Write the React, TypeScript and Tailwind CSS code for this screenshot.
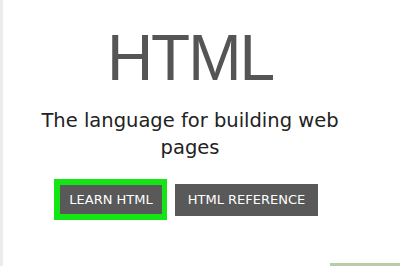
export default function App() {
  return (
    <div className="flex h-[266px] w-[400px] overflow-hidden bg-white">
      <div className="w-[3px] shrink-0 bg-[#ececec]" />
      <div className="flex flex-1 flex-col">
        <div className="flex w-[374px] flex-col items-center pt-[26px]">
          <h1
            className="text-[64px] leading-[64px] font-normal tracking-[-2px] text-[#555555]"
            style={{ fontFamily: '"Liberation Sans", Arial, sans-serif' }}
          >
            HTML
          </h1>
          <p
            className="mt-[17px] w-[320px] text-center text-[19.5px] leading-[27px] text-[#222222]"
            style={{ fontFamily: '"DejaVu Sans", Verdana, sans-serif' }}
          >
            The language for building web pages
          </p>
        </div>
        <div
          className="mt-[18px] flex items-center gap-[8px] pl-[51px]"
          style={{ fontFamily: '"DejaVu Sans", Verdana, sans-serif' }}
        >
          <div className="bg-[#14e514] p-[6px] pr-[5px]">
            <button className="flex h-[29px] w-[102px] items-center justify-center bg-[#595959] text-[13px] text-white">
              LEARN HTML
            </button>
          </div>
          <button className="flex h-[32px] w-[143px] items-center justify-center bg-[#595959] text-[13px] text-white">
            HTML REFERENCE
          </button>
        </div>
        <div className="mt-auto h-[3px] w-[70px] self-end bg-[#b8cca8]" />
      </div>
    </div>
  );
}
